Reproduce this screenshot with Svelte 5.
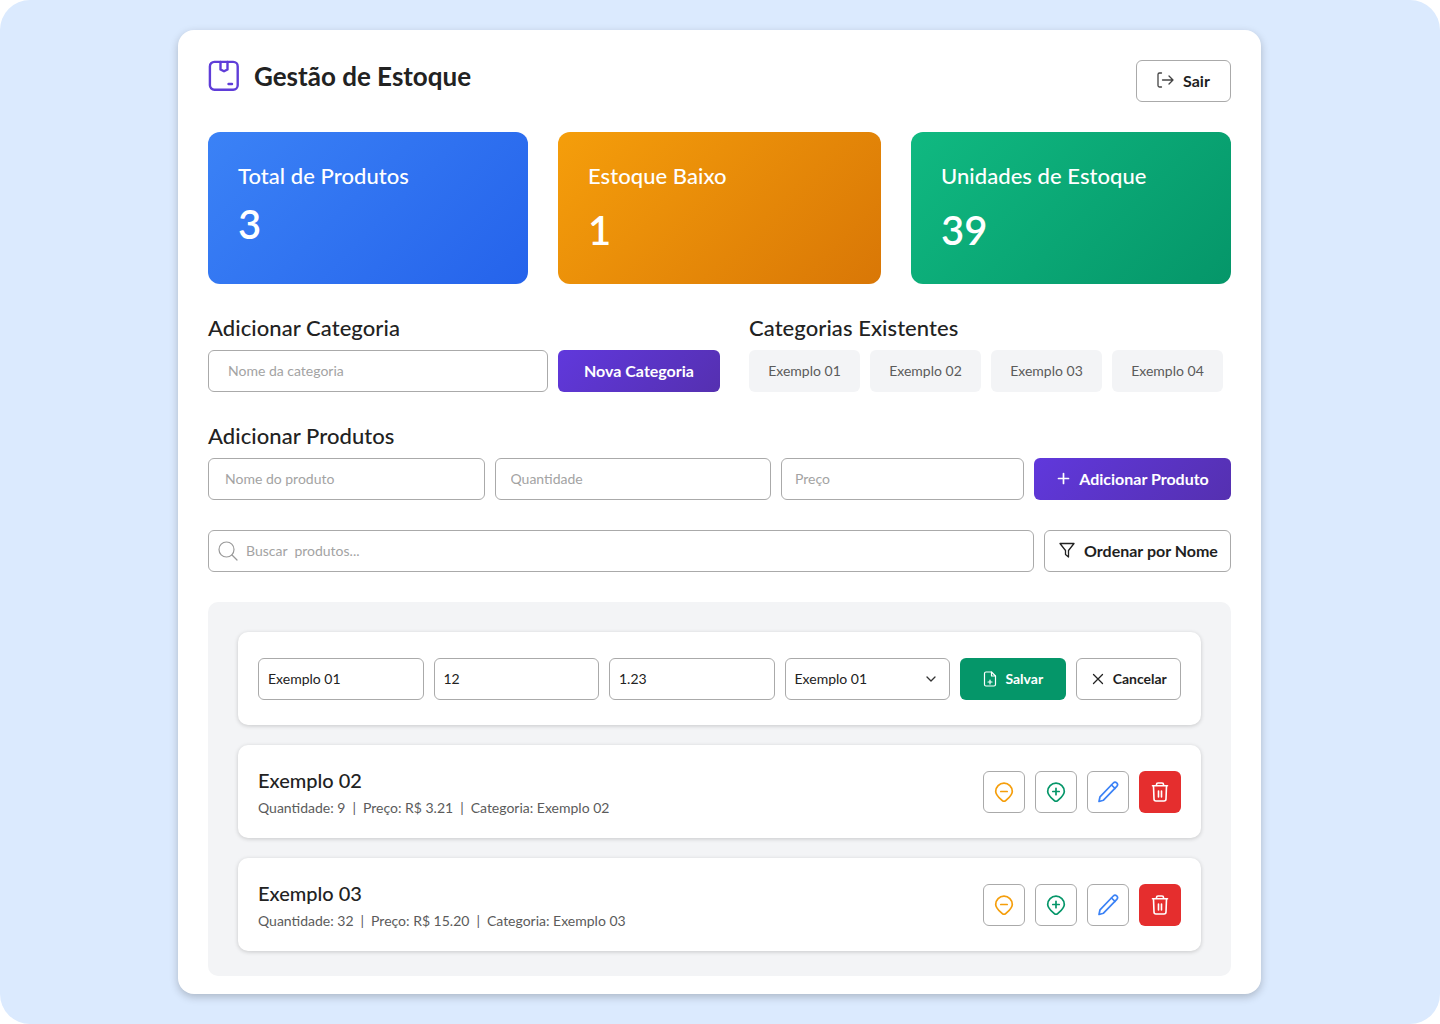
<script>
  const chips = ['Exemplo 01', 'Exemplo 02', 'Exemplo 03', 'Exemplo 04'];
  const stats = [
    { label: 'Total de Produtos', value: '3', cls: 'blue' },
    { label: 'Estoque Baixo', value: '1', cls: 'amber' },
    { label: 'Unidades de Estoque', value: '39', cls: 'green' }
  ];
  const rows = [
    { name: 'Exemplo 02', q: 9, p: '3.21', c: 'Exemplo 02' },
    { name: 'Exemplo 03', q: 32, p: '15.20', c: 'Exemplo 03' }
  ];
  const badge = 'M10 1.200a8.300 8.300 0 0 1 8.300 8.300c0 3.500-3.200 6-6.300 8.900a2.900 2.900 0 0 1-4 0C4.900 15.500 1.700 13 1.700 9.500A8.300 8.300 0 0 1 10 1.200z';
</script>

<div class="page">
  <main class="card">
    <header class="top">
      <div class="brand">
        <svg width="32" height="32" viewBox="0 0 32 32" fill="none" stroke="#5f3dd8" stroke-width="2.400" stroke-linecap="round" stroke-linejoin="round">
          <rect x="1.900" y="1.900" width="27.800" height="27.800" rx="4.500" />
          <path d="M12.500 2v7.500l3.500 1.800 3.500-1.800V2" />
          <path d="M20.500 24h3.500" />
        </svg>
        <h1>Gestão de Estoque</h1>
      </div>
      <button class="btn outline sair up">
        <svg width="18" height="18" viewBox="0 0 18 18" fill="none" stroke="#444" stroke-width="1.300" stroke-linecap="round" stroke-linejoin="round">
          <path d="M5.500 2H3.500A1.500 1.500 0 0 0 2 3.500v11A1.500 1.500 0 0 0 3.500 16h2" />
          <path d="M6.500 9H17M13 5l4 4-4 4" />
        </svg>
        Sair
      </button>
    </header>

    <section class="stats">
      {#each stats as s}
        <div class="stat {s.cls}">
          <div class="stat-label">{s.label}</div>
          <div class="stat-value">{s.value}</div>
        </div>
      {/each}
    </section>

    <section class="cats">
      <div class="cat-add">
        <h2>Adicionar Categoria</h2>
        <div class="line">
          <input class="field up w340 pad20" placeholder="Nome da categoria" />
          <button class="btn primary up nova">Nova Categoria</button>
        </div>
      </div>
      <div class="cat-list">
        <h2>Categorias Existentes</h2>
        <div class="line">
          {#each chips as c}<span class="chip up">{c}</span>{/each}
        </div>
      </div>
    </section>

    <section class="prod">
      <h2>Adicionar Produtos</h2>
      <div class="prod-line">
        <input class="field up pad16" placeholder="Nome do produto" />
        <input class="field up pad15" placeholder="Quantidade" />
        <input class="field up pad13" placeholder="Preço" />
        <button class="btn primary up add">
          <svg width="14" height="14" viewBox="0 0 14 14" fill="none" stroke="#fff" stroke-width="1.700" stroke-linecap="round"><path d="M7.500 2.500v10M2.500 7.500h10" /></svg>
          Adicionar Produto
        </button>
      </div>
    </section>

    <section class="search-line">
      <div class="search">
        <svg width="20" height="20" viewBox="0 0 20 20" fill="none" stroke="#9a9a9a" stroke-width="1.200" stroke-linecap="round"><circle cx="8.500" cy="8.500" r="7.500" /><path d="M14 14l5 5" /></svg>
        <input class="up" placeholder="Buscar  produtos..." />
      </div>
      <button class="btn outline up order">
        <svg width="18" height="18" viewBox="0 0 18 18" fill="none" stroke="#222" stroke-width="1.300" stroke-linejoin="round"><path d="M2 2.500h14l-5.500 7V16l-3-2.500v-4z" /></svg>
        Ordenar por Nome
      </button>
    </section>

    <section class="list">
      <div class="item edit">
        <input class="field small" value="Exemplo 01" />
        <input class="field small" value="12" />
        <input class="field small" value="1.23" />
        <div class="field small select">
          Exemplo 01
          <svg width="12" height="12" viewBox="0 0 12 12" fill="none" stroke="#333" stroke-width="1.300" stroke-linecap="round" stroke-linejoin="round"><path d="M2 4l4 4 4-4" /></svg>
        </div>
        <button class="btn save">
          <svg width="16" height="16" viewBox="0 0 16 16" fill="none" stroke="#fff" stroke-width="1.200" stroke-linecap="round" stroke-linejoin="round"><path d="M9.500 1H4A1.500 1.500 0 0 0 2.500 2.500v11A1.500 1.500 0 0 0 4 15h8a1.500 1.500 0 0 0 1.500-1.500V5z" /><path d="M9.500 1v4h4M8 9v4M6 11h4" /></svg>
          Salvar
        </button>
        <button class="btn outline cancel">
          <svg width="12" height="12" viewBox="0 0 12 12" fill="none" stroke="#222" stroke-width="1.300" stroke-linecap="round"><path d="M1.500 1.500l9 9M10.500 1.500l-9 9" /></svg>
          Cancelar
        </button>
      </div>

      {#each rows as r}
        <div class="item row">
          <div class="info">
            <div class="name">{r.name}</div>
            <div class="meta">
              <span>Quantidade: {r.q}</span><span class="bar">|</span><span>Preço: R$ {r.p}</span><span class="bar">|</span><span>Categoria: {r.c}</span>
            </div>
          </div>
          <div class="actions">
            <button class="icon">
              <svg width="20" height="20" viewBox="0 0 20 20" fill="none" stroke="#f59e0b" stroke-width="1.700" stroke-linecap="round" stroke-linejoin="round"><path d={badge} /><path d="M6.800 9.500h6.400" /></svg>
            </button>
            <button class="icon">
              <svg width="20" height="20" viewBox="0 0 20 20" fill="none" stroke="#059669" stroke-width="1.700" stroke-linecap="round" stroke-linejoin="round"><path d={badge} /><path d="M6.800 9.500h6.400M10 6.300v6.400" /></svg>
            </button>
            <button class="icon">
              <svg width="22" height="22" viewBox="0 0 22 22" fill="none" stroke="#3b82f6" stroke-width="1.700" stroke-linecap="round" stroke-linejoin="round"><path d="M16.300 2a2.400 2.400 0 0 1 3.500 3.300L6.500 19.200 2 20.500l1-4.700z" /><path d="M14.500 4l3.500 3.300" /></svg>
            </button>
            <button class="icon del">
              <svg width="20" height="20" viewBox="0 0 20 20" fill="none" stroke="#fff" stroke-width="1.600" stroke-linecap="round" stroke-linejoin="round"><path d="M2.500 3.800h15M6.500 3.800V2.500a1.500 1.500 0 0 1 1.500-1.500h4a1.500 1.500 0 0 1 1.500 1.500v1.300M3.500 4l.5 13a2 2 0 0 0 2 2h8a2 2 0 0 0 2-2l.5-13M8.500 9v6M11.500 9v6" /></svg>
            </button>
          </div>
        </div>
      {/each}
    </section>
  </main>
</div>

<style>
  :global(body) { margin: 0; background: #fff; }
  .page {
    width: 1440px; height: 1024px; box-sizing: border-box; padding-top: 30px;
    background: #dbeafe; border-radius: 30px; font-family: Lato, sans-serif; color: #1f1f1f;
    overflow: hidden;
  }
  .card {
    width: 1083px; height: 964px; box-sizing: border-box; margin-left: 178px; padding: 30px;
    background: #fff; border-radius: 16px; box-shadow: 0 3px 8px rgba(0,0,0,.22);
  }
  .top { display: flex; justify-content: space-between; height: 72px; }
  .brand { display: flex; align-items: flex-start; gap: 14px; }
  h1 { margin: 0; font-size: 26px; line-height: 32px; font-weight: 700; color: #222; }
  h2 { margin: 0 0 9px; font-size: 22px; line-height: 27px; font-weight: 500; letter-spacing: .07px; color: #222; }
  .btn {
    display: inline-flex; align-items: center; justify-content: center; height: 42px; box-sizing: border-box;
    font-family: inherit; border-radius: 6px; border: 0; cursor: pointer; padding: 0;
  }
  .outline { background: #fff; border: 1px solid #aaa; color: #1f1f1f; font-weight: 700; }
  .primary { background: linear-gradient(135deg, #6038dc, #5530b0); color: #fff; font-weight: 700; font-size: 16px; }
  .sair { width: 95px; gap: 9px; font-size: 16px; padding-right: 1px; }
  .stats { display: grid; grid-template-columns: 320px 323px 320px; gap: 30px; height: 152px; }
  .stat { border-radius: 12px; padding: 30px 30px 0; box-sizing: border-box; color: #fff; height: 152px; }
  .stat-label { font-size: 22px; line-height: 28px; font-weight: 500; letter-spacing: .06px; }
  .stat-value { font-size: 40px; line-height: 50px; font-weight: 600; margin-top: 15px; }
  .blue .stat-value { margin-top: 9px; }
  .blue { background: linear-gradient(135deg, #3b82f6, #2563eb); }
  .amber { background: linear-gradient(135deg, #f59e0b, #d97706); }
  .green { background: linear-gradient(135deg, #10b981, #059669); }
  .cats { display: flex; margin-top: 30px; }
  .cat-add { width: 541px; }
  .line { display: flex; gap: 10px; }
  .field {
    box-sizing: border-box; height: 42px; border: 1px solid #aaa; border-radius: 6px; background: #fff;
    font-family: inherit; font-size: 14px; color: #222; outline: none; min-width: 0;
  }
  .field::placeholder, .search input::placeholder { color: #a3a3a3; opacity: 1; }
  .w340 { width: 340px; }
  .pad20 { padding: 0 19px; }
  .pad16 { padding: 0 16px; }
  .pad15 { padding: 0 15px; }
  .pad13 { padding: 0 13px; }
  .nova { width: 162px; }
  .chip {
    display: flex; align-items: center; justify-content: center; width: 111px; height: 42px; box-sizing: border-box;
    background: #f3f4f6; border-radius: 6px; font-size: 14px; color: #5b5b5b;
  }
  .prod { margin-top: 30px; }
  .prod-line { display: grid; grid-template-columns: 276.500px 276.500px 243px 197px; gap: 10px; }
  .add { gap: 9px; font-size: 16px; }
  .search-line { display: flex; gap: 10px; margin-top: 30px; }
  .search {
    flex: 1; height: 42px; box-sizing: border-box; border: 1px solid #aaa; border-radius: 6px;
    display: flex; align-items: center; gap: 6px; padding-left: 9px;
  }
  .search input { flex: 1; height: 40px; box-sizing: border-box; border: 0; outline: 0; font-family: inherit; font-size: 14px; background: none; white-space: pre; }
  .order { width: 187px; gap: 8px; font-size: 16px; padding-left: 1px; }
  .list {
    margin-top: 30px; height: 374px; box-sizing: border-box; padding: 30px 30px 25px;
    background: #f3f4f6; border-radius: 10px; display: flex; flex-direction: column; gap: 20px;
  }
  .item {
    height: 93px; flex-shrink: 0; box-sizing: border-box; background: #fff; border-radius: 10px; padding: 0 20px;
    box-shadow: 0 1px 4px rgba(0,0,0,.18); display: flex; align-items: center;
  }
  .edit { display: grid; grid-template-columns: repeat(4, 165.500px) 105.500px 105.500px; gap: 10px; }
  .small { padding: 0 9px; width: 100%; }
  .select { display: flex; align-items: center; justify-content: space-between; padding-right: 12px; }
  .save { background: #059669; color: #fff; font-size: 14px; font-weight: 700; gap: 7px; }
  .cancel { font-size: 14px; gap: 9px; padding-left: 2px; }
  .row { justify-content: space-between; }
  .info { padding-top: 1px; }
  .name { font-size: 20px; line-height: 24px; font-weight: 500; color: #222; }
  .meta { margin-top: 7px; font-size: 14px; line-height: 17px; color: #5b5b5b; display: flex; }
  .bar { margin: 0 7px; }
  .actions { display: flex; gap: 10px; }
  .icon {
    width: 42px; height: 42px; box-sizing: border-box; padding: 0; background: #fff; border: 1px solid #aaa;
    border-radius: 6px; display: flex; align-items: center; justify-content: center;
  }
  .del { background: #e52e2e; border: 0; }
  .up { padding-bottom: 2px; }
</style>
